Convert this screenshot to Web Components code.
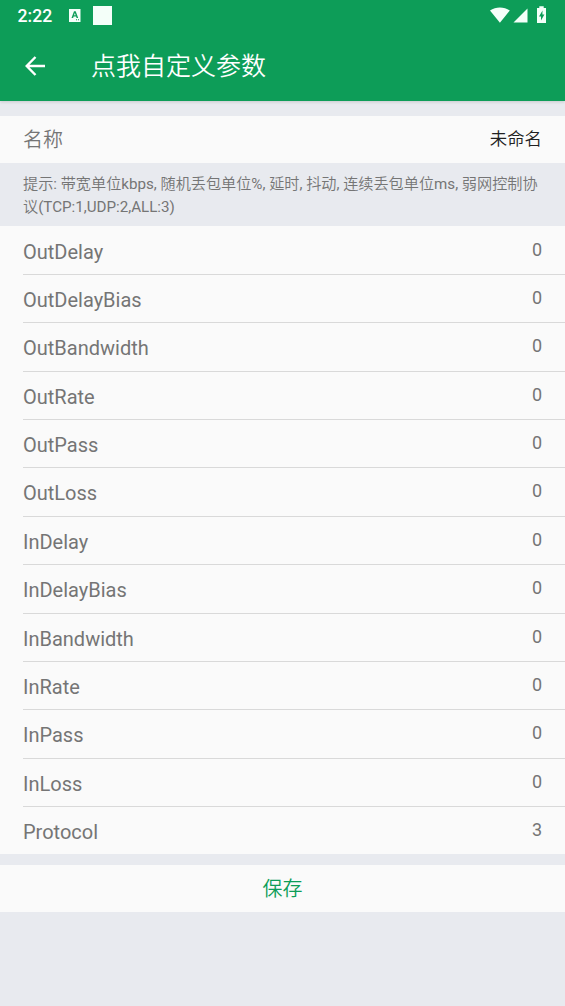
<!DOCTYPE html>
<html lang="zh-CN">
<head>
<meta charset="UTF-8">
<meta name="viewport" content="width=device-width, initial-scale=1">
<title>点我自定义参数</title>
<style>
    :root {
        --primary: #0d9d58;
        --background: #e8eaef;
        --surface: #fafafa;
        --text: #757575;
        --divider: #d9d9d9;
    }
    body {
        margin: 0;
        background: var(--background);
        font-family: Roboto, "Noto Sans CJK SC DemiLight", "Noto Sans CJK SC", sans-serif;
        color: var(--text);
    }
</style>
</head>
<body>
<custom-params></custom-params>

<script>
class StatusBar extends HTMLElement {
    constructor() {
        super();
        this.attachShadow({ mode: 'open' });
    }

    connectedCallback() {
        this.shadowRoot.innerHTML = `
        <style>
            :host {
                display: flex;
                align-items: center;
                justify-content: space-between;
                box-sizing: border-box;
                height: 31px;
                padding: 0 16px 0 17.5px;
                color: #fff;
            }
            .group {
                display: flex;
                align-items: center;
            }
            .time {
                font-size: 17.6px;
                font-weight: 500;
                line-height: 31px;
                padding-top: 1px;
                width: 51.5px;
            }
            svg {
                display: block;
                fill: #f4fff9;
            }
        </style>
        <div class="group">
            <span class="time">${this.getAttribute('time')}</span>
            <svg width="43" height="19" viewBox="0 0 43 19">
                <path fill-rule="evenodd" d="M0 3h11.5v13H0zM5 5.2 2.5 12h1.6l.5-1.5h2.5l.5 1.5h1.6L6.7 5.2zM5.85 6.9 6.7 9.3H5z"/>
                <path d="M7 13.3h1v1H7zM9 13.3h1v1H9z" fill="#0d9d58"/>
                <path d="M24 0h19v19H24z"/>
            </svg>
        </div>
        <div class="group">
            <svg width="59" height="19" viewBox="0 0 59 19">
                <path d="M0 4.6C5.8.6 14 .6 19.8 4.6L9.9 16.7z"/>
                <path d="M37.5 2.500v14H23.500z"/>
                <path fill-rule="evenodd" d="M49.3.3h4.4v1.7h2.3v15h-9V2h2.300zM52.500 4.500l-3.500 6h2v4l3.400-6h-2z"/>
            </svg>
        </div>
        `;
    }
}

class AppBar extends HTMLElement {
    constructor() {
        super();
        this.attachShadow({ mode: 'open' });
    }

    connectedCallback() {
        this.shadowRoot.innerHTML = `
        <style>
            :host {
                display: block;
                height: 100.5px;
                background: var(--primary);
                color: #fff;
                box-shadow: 0 1px 3px rgba(0, 0, 0, .14);
            }
            .toolbar {
                display: flex;
                align-items: center;
                height: 69px;
                padding-left: 25px;
            }
            svg {
                display: block;
                margin-right: 45px;
            }
            .title {
                padding-top: 2px;
                font-size: 25px;
                line-height: 36px;
                font-weight: 350;
            }
        </style>
        <status-bar time="2:22"></status-bar>
        <div class="toolbar">
            <svg width="21" height="20" viewBox="0 0 21 20" fill="none" stroke="#fff" stroke-width="2.4">
                <path d="M20 10H2M10.5 1 1.7 10l8.8 9"/>
            </svg>
            <span class="title"><slot></slot></span>
        </div>
        `;
    }
}

class ParamRow extends HTMLElement {
    constructor() {
        super();
        this.attachShadow({ mode: 'open' });
    }

    connectedCallback() {
        this.shadowRoot.innerHTML = `
        <style>
            :host {
                display: block;
                height: var(--row-height, 48.38px);
                padding-left: 23px;
                background: var(--surface);
            }
            .row {
                display: flex;
                justify-content: space-between;
                box-sizing: border-box;
                height: 100%;
                padding-right: 23px;
                border-top: 1px solid var(--divider);
            }
            :host([first]) .row {
                border-top-color: transparent;
            }
            .label {
                font-size: 20px;
                font-weight: var(--row-weight, 400);
                line-height: var(--label-line, 50px);
            }
            .value {
                font-size: var(--value-size, 18px);
                font-weight: var(--row-weight, 400);
                line-height: var(--value-line, 45px);
                color: var(--value-color, var(--text));
            }
        </style>
        <div class="row">
            <span class="label">${this.getAttribute('label')}</span>
            <span class="value">${this.getAttribute('value')}</span>
        </div>
        `;
    }
}

class HintText extends HTMLElement {
    constructor() {
        super();
        this.attachShadow({ mode: 'open' });
    }

    connectedCallback() {
        this.shadowRoot.innerHTML = `
        <style>
            :host {
                display: block;
                box-sizing: border-box;
                height: 62.5px;
                padding: 10px 23px 0;
                font-size: 15.15px;
                line-height: 22.5px;
            }
        </style>
        <slot></slot>
        `;
    }
}

class SaveButton extends HTMLElement {
    constructor() {
        super();
        this.attachShadow({ mode: 'open' });
    }

    connectedCallback() {
        this.shadowRoot.innerHTML = `
        <style>
            :host {
                display: block;
                margin-top: 10.3px;
            }
            button {
                display: block;
                width: 100%;
                height: 47px;
                padding: 2px 0 0;
                border: none;
                background: var(--surface);
                color: var(--primary);
                font: inherit;
                font-size: 20px;
                line-height: 45px;
            }
        </style>
        <button type="button"><slot></slot></button>
        `;
    }
}

class CustomParams extends HTMLElement {
    constructor() {
        super();
        this.attachShadow({ mode: 'open' });
        this.params = [
            ['OutDelay', 0],
            ['OutDelayBias', 0],
            ['OutBandwidth', 0],
            ['OutRate', 0],
            ['OutPass', 0],
            ['OutLoss', 0],
            ['InDelay', 0],
            ['InDelayBias', 0],
            ['InBandwidth', 0],
            ['InRate', 0],
            ['InPass', 0],
            ['InLoss', 0],
            ['Protocol', 3]
        ];
    }

    connectedCallback() {
        const rows = this.params.map(([label, value], i) =>
            `<param-row label="${label}" value="${value}" ${i === 0 ? 'first' : ''}></param-row>`
        ).join('');

        this.shadowRoot.innerHTML = `
        <style>
            :host {
                display: block;
                min-height: 100vh;
            }
            .name {
                --row-height: 47.5px;
                --row-weight: 350;
                --label-line: 46px;
                --value-line: 44px;
                --value-size: 17.4px;
                --value-color: #212121;
                margin-top: 15px;
            }
        </style>
        <app-bar>点我自定义参数</app-bar>
        <param-row class="name" label="名称" value="未命名" first></param-row>
        <hint-text>提示: 带宽单位kbps, 随机丢包单位%, 延时, 抖动, 连续丢包单位ms, 弱网控制协议(TCP:1,UDP:2,ALL:3)</hint-text>
        ${rows}
        <save-button>保存</save-button>
        `;
    }
}

customElements.define('status-bar', StatusBar);
customElements.define('app-bar', AppBar);
customElements.define('param-row', ParamRow);
customElements.define('hint-text', HintText);
customElements.define('save-button', SaveButton);
customElements.define('custom-params', CustomParams);
</script>
</body>
</html>
